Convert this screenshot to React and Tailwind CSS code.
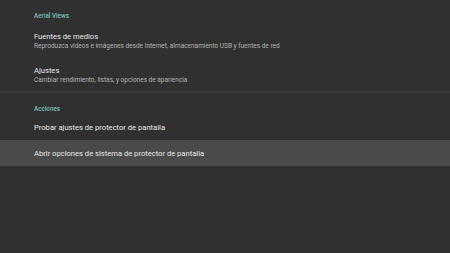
export default function App() {
  const font = { fontFamily: 'Roboto, "Noto Sans", sans-serif' };
  return (
    <div className="w-[450px] h-[253px] bg-[#303030] overflow-hidden" style={font}>
      <div className="h-[28px] pt-[12px] pl-[34px] text-[6.3px] leading-[8px] font-medium text-[#7cc0b5]">
        Aerial Views
      </div>
      <div className="pl-[34px] pt-[4px]">
        <div className="text-[7.6px] leading-[9px] text-[#e8e8e8]">Fuentes de medios</div>
        <div className="text-[6.5px] leading-[10px] text-[#b4b4b4]">
          Reproduzca vídeos e imágenes desde Internet, almacenamiento USB y fuentes de red
        </div>
      </div>
      <div className="pl-[34px] pt-[15px]">
        <div className="text-[7.6px] leading-[9px] text-[#e8e8e8]">Ajustes</div>
        <div className="text-[6.5px] leading-[10px] text-[#b4b4b4]">
          Cambiar rendimiento, listas, y opciones de apariencia
        </div>
      </div>
      <div className="mt-[6px] h-[2px] bg-[#393939]" />
      <div className="h-[22px] pt-[12px] pl-[34px] text-[6.3px] leading-[8px] font-medium text-[#7cc0b5]">
        Acciones
      </div>
      <div className="h-[25px] flex items-center pt-[1px] pl-[34px] text-[7.6px] text-[#e8e8e8]">
        Probar ajustes de protector de pantalla
      </div>
      <div className="h-[26px] flex items-center pt-[1px] pl-[34px] text-[7.6px] text-[#e8e8e8] bg-[#4a4a4a]">
        Abrir opciones de sistema de protector de pantalla
      </div>
    </div>
  );
}
